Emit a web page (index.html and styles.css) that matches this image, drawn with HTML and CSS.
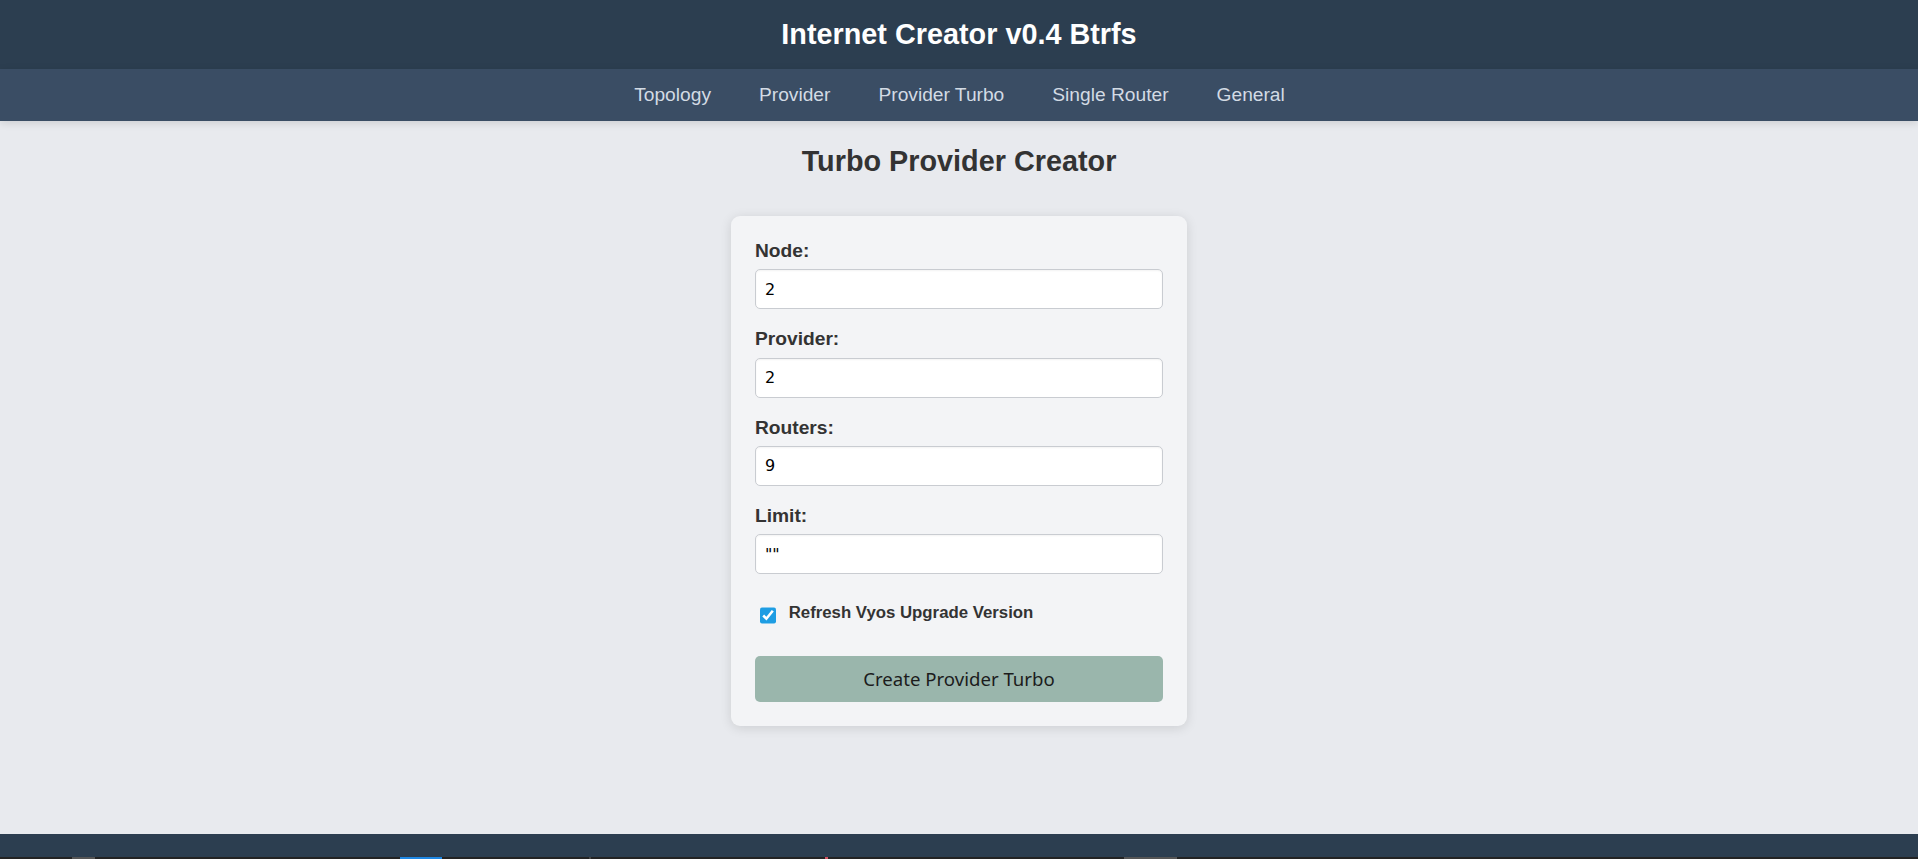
FILE: index.html
```html
<!DOCTYPE html>
<html lang="en">
<head>
<meta charset="utf-8">
<title>Internet Creator v0.4 Btrfs</title>
<link rel="stylesheet" href="styles.css">
</head>
<body>
<div class="page">
  <header class="top">
    <h1 class="brand">Internet Creator v0.4 Btrfs</h1>
  </header>
  <nav class="nav">
    <a href="#">Topology</a>
    <a href="#">Provider</a>
    <a href="#">Provider Turbo</a>
    <a href="#">Single Router</a>
    <a href="#">General</a>
  </nav>
  <main class="main">
    <h2 class="title">Turbo Provider Creator</h2>
    <form class="card">
      <div class="group">
        <label class="lbl" for="node">Node:</label>
        <input class="inp" id="node" type="text" value="2">
      </div>
      <div class="group">
        <label class="lbl" for="provider">Provider:</label>
        <input class="inp" id="provider" type="text" value="2">
      </div>
      <div class="group">
        <label class="lbl" for="routers">Routers:</label>
        <input class="inp" id="routers" type="text" value="9">
      </div>
      <div class="group">
        <label class="lbl" for="limit">Limit:</label>
        <input class="inp" id="limit" type="text" value='""'>
      </div>
      <div class="check-row">
        <input class="chk" id="refresh" type="checkbox" checked>
        <label class="chk-lbl" for="refresh">Refresh Vyos Upgrade Version</label>
      </div>
      <button class="btn" type="button">Create Provider Turbo</button>
    </form>
  </main>
  <footer class="foot"></footer>
  <div class="strip">
    <span class="s1"></span><span class="s2"></span><span class="s3"></span><span class="s4"></span><span class="s5"></span>
  </div>
</div>
</body>
</html>
```

FILE: styles.css
```css
html, body {
  margin: 0;
  padding: 0;
  height: 100%;
}
body {
  background: #e8eaee;
  font-family: "Liberation Sans", Arial, sans-serif;
  color: #333;
}
.page {
  display: flex;
  flex-direction: column;
  height: 859px;
  overflow: hidden;
}
.top {
  background: #2c3e50;
  height: 69px;
  display: flex;
  align-items: center;
  justify-content: center;
  flex: none;
}
.brand {
  margin: 0;
  color: #fff;
  font-size: 28.8px;
  font-weight: bold;
  line-height: 1;
  padding-bottom: 1px;
}
.nav {
  background: #3a4d64;
  height: 52px;
  display: flex;
  align-items: center;
  justify-content: center;
  gap: 47px;
  flex: none;
  box-shadow: 0 2px 8px rgba(0,0,0,0.12);
  position: relative;
  z-index: 1;
}
.nav a {
  color: #d3dbe4;
  text-decoration: none;
  font-size: 19.2px;
  line-height: 1;
  margin-left: 1px;
}
.main {
  flex: 1;
  display: flex;
  flex-direction: column;
  align-items: center;
}
.title {
  margin: 24px 0 0;
  font-size: 28.8px;
  font-weight: bold;
  color: #333;
  line-height: 33px;
}
.card {
  margin-top: 38px;
  width: 456px;
  box-sizing: border-box;
  padding: 24px;
  background: #f3f4f6;
  border-radius: 9px;
  box-shadow: 0 2px 12px rgba(0,0,0,0.12);
  display: flex;
  flex-direction: column;
}
.group {
  display: flex;
  flex-direction: column;
  margin-bottom: 19.2px;
}
.lbl {
  font-size: 19.2px;
  font-weight: bold;
  color: #333;
  line-height: 22px;
  margin-bottom: 7.2px;
}
.inp {
  box-sizing: border-box;
  height: 40px;
  width: 100%;
  border: 1.2px solid #c9ccd1;
  border-radius: 5px;
  padding: 0 9px;
  font-family: "DejaVu Sans", sans-serif;
  font-size: 16px;
  color: #000;
  background: #fff;
  box-shadow: inset 0 1px 2px rgba(0,0,0,0.05);
  outline: none;
}
.check-row {
  display: flex;
  align-items: flex-start;
  margin-top: 9.7px;
}
.chk {
  width: 16.4px;
  height: 16.4px;
  margin: 4px 12.3px 0 5px;
  accent-color: #1e9de3;
  flex: none;
}
.chk-lbl {
  font-size: 16.8px;
  font-weight: bold;
  color: #333;
  line-height: 19.3px;
}
.btn {
  margin-top: 32.4px;
  height: 46px;
  width: 100%;
  border: none;
  border-radius: 5px;
  background: #9ab6ac;
  color: #1c1c1c;
  font-family: "Noto Sans", "Open Sans", sans-serif;
  font-size: 18.6px;
  cursor: pointer;
}
.foot {
  flex: none;
  height: 23px;
  background: #2c3e50;
}
.strip {
  flex: none;
  height: 2px;
  background: #232323;
  display: flex;
}
.strip span {
  display: block;
  height: 2px;
}
.s1 { width: 23px; margin-left: 72px; background: #555; }
.s2 { width: 42px; margin-left: 305px; background: #1e88e5; }
.s3 { width: 2px; margin-left: 147px; background: #444; }
.s4 { width: 3px; margin-left: 234px; background: #d05060; }
.s5 { width: 53px; margin-left: 296px; background: #555; }
```
